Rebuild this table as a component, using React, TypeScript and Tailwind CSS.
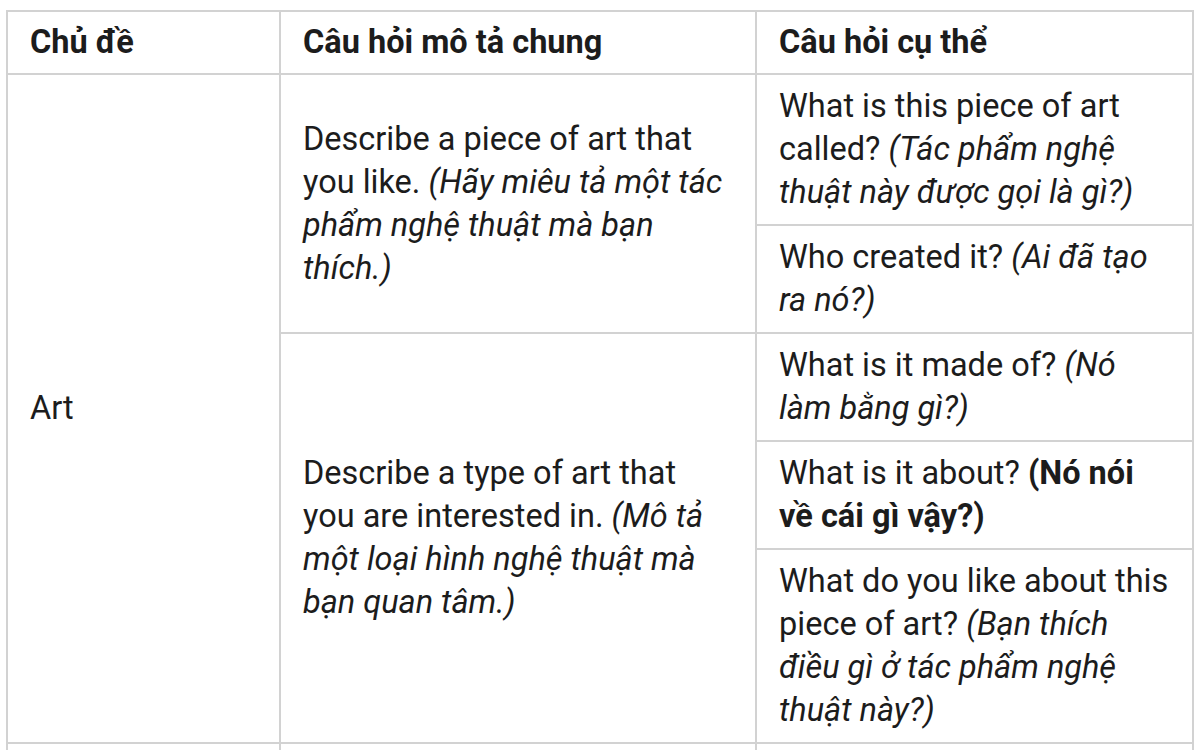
const cell = "border-2 border-[#d2d2d2] px-[22px] py-[10px] align-middle";
const head = "border-2 border-[#d2d2d2] px-[22px] py-[9px] text-left align-middle font-bold";

export default function App() {
  return (
    <div className="min-h-screen bg-white pl-[6px] pt-[10px] font-['Roboto','Liberation_Sans',sans-serif] text-[32.5px] leading-[43px] text-[#1c1c1c]">
      <table className="w-[1186px] table-fixed border-collapse">
        <colgroup>
          <col className="w-[273px]" />
          <col className="w-[476px]" />
          <col className="w-[437px]" />
        </colgroup>
        <thead>
          <tr>
            <th className={head}>Chủ đề</th>
            <th className={head}>Câu hỏi mô tả chung</th>
            <th className={head}>Câu hỏi cụ thể</th>
          </tr>
        </thead>
        <tbody>
          <tr>
            <td rowSpan={5} className={cell}>
              Art
            </td>
            <td rowSpan={2} className={cell}>
              Describe a piece of art that you like. <i>(Hãy miêu tả một tác phẩm nghệ thuật mà bạn thích.)</i>
            </td>
            <td className={cell}>
              What is this piece of art called? <i>(Tác phẩm nghệ thuật này được gọi là gì?)</i>
            </td>
          </tr>
          <tr>
            <td className={cell}>
              Who created it? <i>(Ai đã tạo ra nó?)</i>
            </td>
          </tr>
          <tr>
            <td rowSpan={3} className={cell}>
              Describe a type of art that you are interested in. <i>(Mô tả một loại hình nghệ thuật mà bạn quan tâm.)</i>
            </td>
            <td className={cell}>
              What is it made of? <i>(Nó làm bằng gì?)</i>
            </td>
          </tr>
          <tr>
            <td className={cell}>
              What is it about? <b>(Nó nói về cái gì vậy?)</b>
            </td>
          </tr>
          <tr>
            <td className={cell}>
              What do you like about this piece of art? <i>(Bạn thích điều gì ở tác phẩm nghệ thuật này?)</i>
            </td>
          </tr>
          <tr>
            <td className={`${cell} h-[120px]`}></td>
            <td className={cell}></td>
            <td className={cell}></td>
          </tr>
        </tbody>
      </table>
    </div>
  );
}
